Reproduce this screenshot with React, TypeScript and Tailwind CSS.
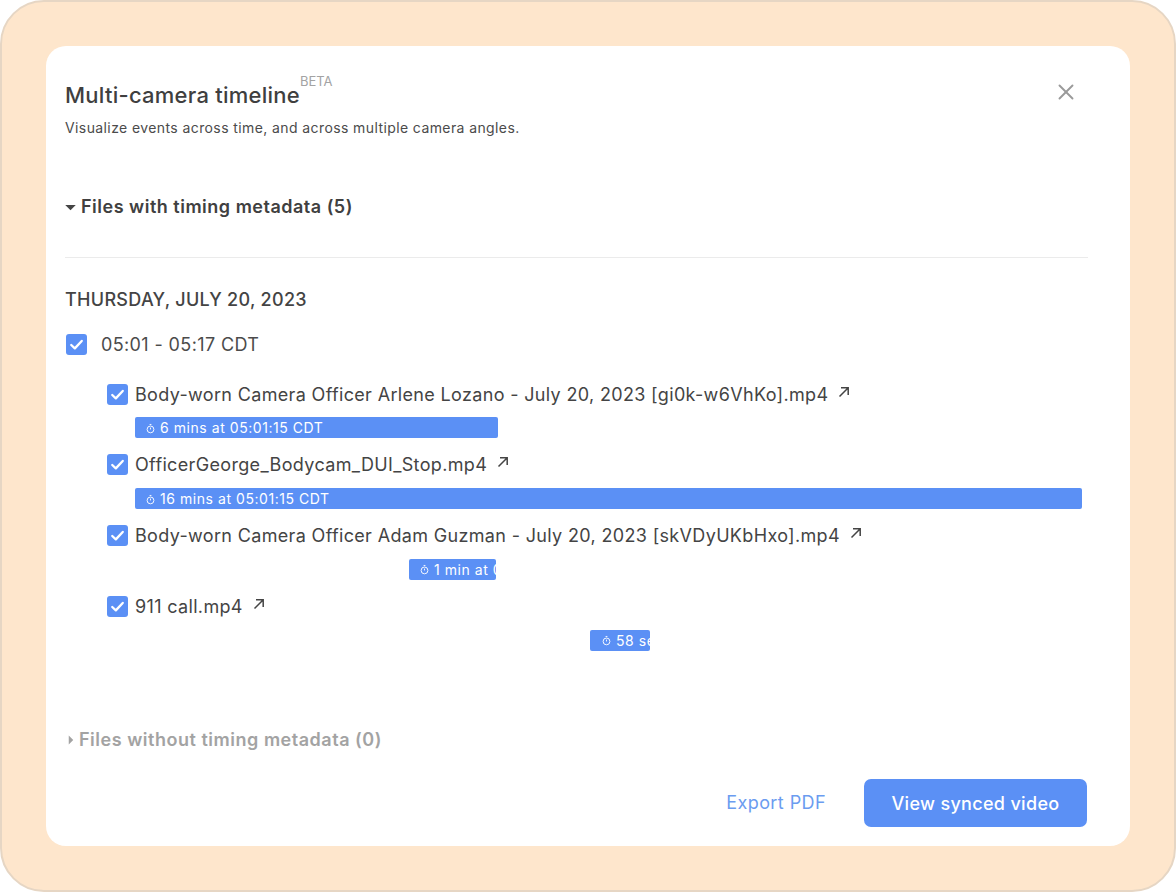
import React from "react";
import { X } from "lucide-react";

const Check = ({ className }: { className: string }) => (
  <span className={`flex items-center justify-center rounded-[3px] bg-[#5b90f5] ${className}`}>
    <svg viewBox="0 0 20 20" className="w-full h-full" fill="none" stroke="white" strokeWidth="2.2" strokeLinecap="round" strokeLinejoin="round">
      <path d="M5 10.5l3.4 3.2L15 6.6" />
    </svg>
  </span>
);

const OutArrow = () => (
  <svg viewBox="0 0 14 14" className="w-[14px] h-[14px] ml-[9px] mb-[5px] shrink-0" fill="none" stroke="#444" strokeWidth="1.5">
    <path d="M2.5 11.5L11 3M4 2.8h7.2V10" />
  </svg>
);

const Timer = () => (
  <svg viewBox="0 0 12 12" className="w-[11px] h-[11px] shrink-0 mr-[4px] mt-[1px]" fill="none" stroke="white" strokeWidth="1">
    <circle cx="6" cy="7" r="3.7" />
    <path d="M6 7V5M5 1.6h2" />
  </svg>
);

interface FileRow {
  name: string;
  label: string;
  barClass: string;
}

const files: FileRow[] = [
  { name: "Body-worn Camera Officer Arlene Lozano - July 20, 2023 [gi0k-w6VhKo].mp4", label: "6 mins at 05:01:15 CDT", barClass: "w-[363px] ml-0 pl-[10px]" },
  { name: "OfficerGeorge_Bodycam_DUI_Stop.mp4", label: "16 mins at 05:01:15 CDT", barClass: "w-[947px] ml-0 pl-[10px]" },
  { name: "Body-worn Camera Officer Adam Guzman - July 20, 2023 [skVDyUKbHxo].mp4", label: "1 min at 05:06:23 CDT", barClass: "w-[87px] ml-[274px] pl-[10px]" },
  { name: "911 call.mp4", label: "58 secs at 05:09:40 CDT", barClass: "w-[60px] ml-[455px] pl-[11px]" },
];

export default function App() {
  return (
    <div className="w-[1176px] h-[892px] bg-white overflow-hidden" style={{ fontFamily: "Inter, 'Liberation Sans', sans-serif" }}>
      <div className="w-full h-full rounded-[44px] border-2 border-[#e6d6c4] bg-[#fee6cc] p-[44px]">
        <div className="w-[1084px] h-[800px] rounded-[20px] bg-white pl-[19px] pr-[42px] flex flex-col text-[#444444]">
          <div className="flex justify-between pt-[25px]">
            <div>
              <div className="flex items-start">
                <h1 className="text-[22px] leading-[48px] font-medium tracking-[0.25px] text-[#3f3f3f]">Multi-camera timeline</h1>
                <span className="text-[13px] leading-[20px] text-[#a3a3a3]">BETA</span>
              </div>
              <p className="text-[14px] leading-[20px] tracking-[0.4px] text-[#4b4b4b] -mt-[1px]">Visualize events across time, and across multiple camera angles.</p>
            </div>
            <button className="mt-[8px] mr-[9px] h-[26px] w-[26px] flex items-center justify-center text-[#9a9a9a]">
              <X size={26} strokeWidth={1.75} />
            </button>
          </div>

          <div className="flex items-center mt-[56px] h-[24px]">
            <svg viewBox="0 0 12 8" className="w-[11px] h-[7px] mr-[5px] mt-[2px]" fill="#444444"><path d="M0 1h12L6 7z" /></svg>
            <span className="text-[18px] font-semibold text-[#404040] tracking-[0.5px]">Files with timing metadata (5)</span>
          </div>
          <div className="h-px bg-[#ebebeb] mt-[39px]" />

          <div className="mt-[30px] text-[18px] leading-[24px] font-medium text-[#444444] tracking-[0.3px]">THURSDAY, JULY 20, 2023</div>

          <div className="flex items-center mt-[20px] h-[24px] ml-[1px]">
            <Check className="w-[21px] h-[21px]" />
            <span className="ml-[14px] text-[18px] text-[#4b4b4b] tracking-[0.38px]">05:01 - 05:17 CDT</span>
          </div>

          <div className="mt-[26px] ml-[42px] flex flex-col">
            {files.map((f) => (
              <div key={f.name} className="h-[70.75px]">
                <div className="flex items-center h-[24px]">
                  <Check className="w-[21px] h-[21px] shrink-0" />
                  <span className="ml-[7px] text-[18px] text-[#444444] tracking-[0.34px] whitespace-nowrap">{f.name}</span>
                  <OutArrow />
                </div>
                <div className="ml-[28px] mt-[11.25px]">
                  <div className={`h-[21px] rounded-[2px] bg-[#5b90f5] text-white text-[14px] tracking-[0.55px] flex items-center overflow-hidden whitespace-nowrap ${f.barClass}`}>
                    <Timer />
                    <span>{f.label}</span>
                  </div>
                </div>
              </div>
            ))}
          </div>

          <div className="flex items-center mt-[62px] h-[24px] ml-[3px]">
            <svg viewBox="0 0 8 12" className="w-[6px] h-[10px] mr-[5px] mt-[1px]" fill="#a3a3a3"><path d="M1 0v12l6-6z" /></svg>
            <span className="text-[18px] font-semibold text-[#a3a3a3] tracking-[0.52px]">Files without timing metadata (0)</span>
          </div>

          <div className="flex items-center justify-end mt-[28px] mr-[1px]">
            <button className="text-[18px] text-[#6b9cf0] tracking-[0.42px] mr-[38px] -translate-y-px">Export PDF</button>
            <button className="w-[223px] h-[48px] rounded-[7px] bg-[#5b90f5] text-white text-[18px] font-medium tracking-[0.32px]">View synced video</button>
          </div>
        </div>
      </div>
    </div>
  );
}
